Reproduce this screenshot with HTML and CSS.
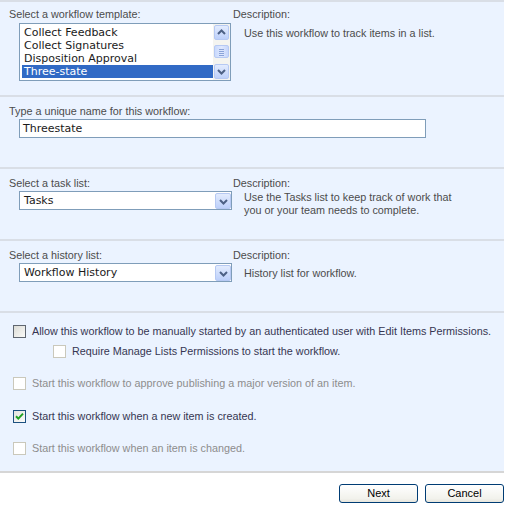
FILE: index.html
```html
<!DOCTYPE html>
<html>
<head>
<meta charset="utf-8">
<link rel="stylesheet" href="styles.css">
</head>
<body>
<div class="panel">
  <section class="sec sec1">
    <div class="col-left">
      <div class="label">Select a workflow template:</div>
      <div class="listbox">
        <div class="items">
          <div class="item">Collect Feedback</div>
          <div class="item">Collect Signatures</div>
          <div class="item">Disposition Approval</div>
          <div class="item selected">Three-state</div>
        </div>
        <div class="scrollbar">
          <div class="sb-btn"><svg width="13" height="13" viewBox="0 0 13 13"><path d="M3 8 L6.5 4.5 L10 8" fill="none" stroke="#4d6185" stroke-width="2"/></svg></div>
          <div class="sb-track">
            <div class="sb-thumb"><svg width="13" height="12" viewBox="0 0 13 12"><path d="M4 3.5 H9 M4 5.5 H9 M4 7.5 H9 M4 9.5 H9" stroke="#8aa3d8" stroke-width="1"/></svg></div>
          </div>
          <div class="sb-btn"><svg width="13" height="13" viewBox="0 0 13 13"><path d="M3 5 L6.5 8.5 L10 5" fill="none" stroke="#4d6185" stroke-width="2"/></svg></div>
        </div>
      </div>
    </div>
    <div class="col-right">
      <div class="label">Description:</div>
      <div class="desc desc1">Use this workflow to track items in a list.</div>
    </div>
  </section>

  <section class="sec sec2">
    <div class="label">Type a unique name for this workflow:</div>
    <div class="textbox">Threestate</div>
  </section>

  <section class="sec sec3">
    <div class="col-left">
      <div class="label">Select a task list:</div>
      <div class="select">
        <span class="select-text">Tasks</span>
        <span class="dd-btn"><svg width="13" height="13" viewBox="0 0 13 13"><path d="M3 5 L6.5 8.5 L10 5" fill="none" stroke="#4d6185" stroke-width="2"/></svg></span>
      </div>
    </div>
    <div class="col-right">
      <div class="label">Description:</div>
      <div class="desc desc3">Use the Tasks list to keep track of work that<br>you or your team needs to complete.</div>
    </div>
  </section>

  <section class="sec sec4">
    <div class="col-left">
      <div class="label">Select a history list:</div>
      <div class="select">
        <span class="select-text">Workflow History</span>
        <span class="dd-btn"><svg width="13" height="13" viewBox="0 0 13 13"><path d="M3 5 L6.5 8.5 L10 5" fill="none" stroke="#4d6185" stroke-width="2"/></svg></span>
      </div>
    </div>
    <div class="col-right">
      <div class="label">Description:</div>
      <div class="desc desc4">History list for workflow.</div>
    </div>
  </section>

  <section class="sec sec5">
    <div class="cb-row r1">
      <span class="cb cb-enabled"></span>
      <span class="cb-text">Allow this workflow to be manually started by an authenticated user with Edit Items Permissions.</span>
    </div>
    <div class="cb-row r2">
      <span class="cb cb-disabled"></span>
      <span class="cb-text">Require Manage Lists Permissions to start the workflow.</span>
    </div>
    <div class="cb-row r3">
      <span class="cb cb-disabled"></span>
      <span class="cb-text disabled">Start this workflow to approve publishing a major version of an item.</span>
    </div>
    <div class="cb-row r4">
      <span class="cb cb-checked"><svg width="11" height="11" viewBox="0 0 11 11"><path d="M2 5.3 L4.3 7.6 L9 2.6" fill="none" stroke="#21a121" stroke-width="2"/></svg></span>
      <span class="cb-text">Start this workflow when a new item is created.</span>
    </div>
    <div class="cb-row r5">
      <span class="cb cb-disabled"></span>
      <span class="cb-text disabled">Start this workflow when an item is changed.</span>
    </div>
  </section>

  <footer class="footer">
    <button class="btn">Next</button>
    <button class="btn">Cancel</button>
  </footer>
</div>
</body>
</html>
```
FILE: styles.css
```css
* { box-sizing: border-box; }
html, body { margin: 0; padding: 0; background: #ffffff; }
body {
  font-family: "Liberation Sans", Arial, sans-serif;
  font-size: 10.8px;
  line-height: 13px;
  color: #4c4c4c;
}
.panel { width: 504px; background: #ebf3ff; }

.sec {
  border-top: 2px solid #d9dee6;
  display: grid;
  grid-template-columns: 224px 1fr;
  align-items: start;
  padding-left: 9px;
}
.sec1 { padding-top: 6px; padding-bottom: 14px; }
.sec2 { display: block; padding-top: 8px; padding-bottom: 29px; }
.sec3 { padding-top: 8px; padding-bottom: 22px; }
.sec4 { padding-top: 8px; padding-bottom: 29px; }

.label { white-space: nowrap; }
.desc { padding-left: 11px; }
.desc1 { margin-top: 6px; }
.desc3 { margin-top: 1px; }
.desc4 { margin-top: 5px; }

.listbox, .textbox, .select {
  font-family: "DejaVu Sans", Verdana, sans-serif;
  font-size: 11px;
  color: #1a1a1a;
}

.listbox {
  margin: 2px 0 0 10px;
  width: 212px;
  height: 58px;
  border: 1px solid #7f9db9;
  background: #fff;
  display: flex;
}
.items { flex: 1; padding: 2px 0 0 2px; overflow: hidden; }
.item { height: 13px; line-height: 13px; padding-left: 2px; white-space: nowrap; }
.item.selected { background: #316ac5; color: #fff; }

.scrollbar {
  width: 17px;
  background: #f4f4f0;
  display: flex;
  flex-direction: column;
  padding: 1px;
}
.sb-btn, .dd-btn {
  width: 15px;
  height: 15px;
  border: 1px solid #b6c9f3;
  border-radius: 2px;
  background: linear-gradient(#e3ecfe, #bdd0fa);
  display: flex;
  align-items: center;
  justify-content: center;
}
.sb-track { flex: 1; padding-top: 5px; }
.sb-thumb {
  width: 15px;
  height: 13px;
  border: 1px solid #b6c9f3;
  border-radius: 2px;
  background: linear-gradient(90deg, #c9d9fc, #dfe8fe 50%, #c6d6fb);
  display: flex;
  align-items: center;
  justify-content: center;
}

.textbox {
  margin: 1px 0 0 10px;
  width: 407px;
  height: 19px;
  border: 1px solid #7f9db9;
  background: #fff;
  padding-left: 3px;
  line-height: 17px;
}

.select {
  margin: 1px 0 0 10px;
  width: 213px;
  height: 19px;
  border: 1px solid #7f9db9;
  background: #fff;
  display: flex;
  align-items: flex-start;
  justify-content: space-between;
}
.select-text { padding-left: 4px; line-height: 17px; }
.dd-btn { margin: 1px 0 0 0; width: 16px; height: 16px; }

.sec5 { display: block; padding: 12px 0 16px 13px; }
.cb-row { display: flex; align-items: flex-start; gap: 6px; color: #363652; }
.r2 { margin-top: 7px; margin-left: 40px; }
.r3 { margin-top: 19px; }
.r4 { margin-top: 20px; }
.r5 { margin-top: 19px; }
.cb-text { white-space: nowrap; }
.cb-text.disabled { color: #8d8d8d; }
.cb {
  width: 13px;
  height: 13px;
  flex: none;
  display: flex;
  align-items: center;
  justify-content: center;
}
.cb-enabled { border: 1px solid #5f6670; background: linear-gradient(135deg, #dcdcd6, #fafaf8); }
.cb-disabled { border: 1px solid #cac8bb; background: #fff; }
.cb-checked { border: 1px solid #1c5180; background: linear-gradient(135deg, #e4e4de, #fbfbfa); }

.footer {
  border-top: 2px solid #d6d6d6;
  background: #fff;
  display: flex;
  justify-content: flex-end;
  gap: 7px;
  padding: 11px 0 6px;
}
.btn {
  width: 79px;
  height: 19px;
  margin: 0;
  padding: 0;
  border: 1px solid #003c74;
  border-radius: 3px;
  background: linear-gradient(#ffffff, #f2f2ec 80%, #e6e5dc);
  font-family: "Liberation Sans", Arial, sans-serif;
  font-size: 11px;
  line-height: 17px;
  color: #000;
}
```
